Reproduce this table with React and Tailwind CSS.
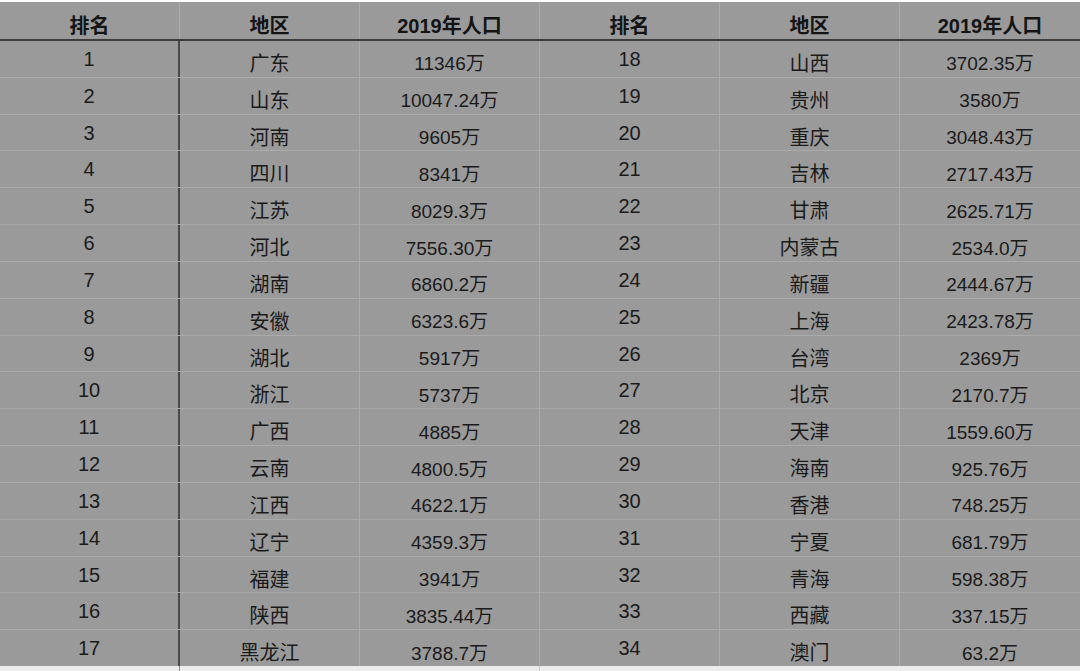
import React from "react";

const left = [
  ["1", "广东", "11346万"],
  ["2", "山东", "10047.24万"],
  ["3", "河南", "9605万"],
  ["4", "四川", "8341万"],
  ["5", "江苏", "8029.3万"],
  ["6", "河北", "7556.30万"],
  ["7", "湖南", "6860.2万"],
  ["8", "安徽", "6323.6万"],
  ["9", "湖北", "5917万"],
  ["10", "浙江", "5737万"],
  ["11", "广西", "4885万"],
  ["12", "云南", "4800.5万"],
  ["13", "江西", "4622.1万"],
  ["14", "辽宁", "4359.3万"],
  ["15", "福建", "3941万"],
  ["16", "陕西", "3835.44万"],
  ["17", "黑龙江", "3788.7万"],
];

const right = [
  ["18", "山西", "3702.35万"],
  ["19", "贵州", "3580万"],
  ["20", "重庆", "3048.43万"],
  ["21", "吉林", "2717.43万"],
  ["22", "甘肃", "2625.71万"],
  ["23", "内蒙古", "2534.0万"],
  ["24", "新疆", "2444.67万"],
  ["25", "上海", "2423.78万"],
  ["26", "台湾", "2369万"],
  ["27", "北京", "2170.7万"],
  ["28", "天津", "1559.60万"],
  ["29", "海南", "925.76万"],
  ["30", "香港", "748.25万"],
  ["31", "宁夏", "681.79万"],
  ["32", "青海", "598.38万"],
  ["33", "西藏", "337.15万"],
  ["34", "澳门", "63.2万"],
];

const font = {
  fontFamily: '"Liberation Sans", "Noto Sans CJK SC", sans-serif',
};

function HeaderCell({ children, border = true }) {
  return (
    <div
      className={
        "w-[180px] flex items-center justify-center pt-[10px] text-[20px] font-bold text-[#141414] " +
        (border ? "border-r border-[#acacac]" : "")
      }
    >
      {children}
    </div>
  );
}

export default function App() {
  const rows = left.map((l, i) => [l, right[i]]);
  return (
    <div className="w-[1080px] h-[671px] bg-white pt-[2px] overflow-hidden" style={font}>
      <div className="bg-[#9a9a9a] h-[664px] flex flex-col">
        <div className="flex h-[39px] border-b-2 border-[#3c3c3c] leading-none">
          <HeaderCell>排名</HeaderCell>
          <HeaderCell>地区</HeaderCell>
          <HeaderCell>2019年人口</HeaderCell>
          <HeaderCell>排名</HeaderCell>
          <HeaderCell>地区</HeaderCell>
          <HeaderCell border={false}>2019年人口</HeaderCell>
        </div>
        <div className="flex-1 flex flex-col">
          {rows.map(([l, r], i) => (
            <div
              key={i}
              className={
                "flex-1 flex text-[#1a1a1a] leading-none " +
                (i > 0 ? "border-t border-[#aaaaaa]" : "")
              }
            >
              <div className="w-[180px] flex items-center justify-center text-[20px] border-r-2 border-[#4a4a4a]">
                {l[0]}
              </div>
              <div className="w-[180px] flex items-center justify-center pt-[10px] text-[20px] border-r border-[#acacac]">
                {l[1]}
              </div>
              <div className="w-[180px] flex items-center justify-center pt-[10px] text-[19px] border-r border-[#acacac]">
                {l[2]}
              </div>
              <div className="w-[180px] flex items-center justify-center text-[20px] border-r border-[#acacac]">
                {r[0]}
              </div>
              <div className="w-[180px] flex items-center justify-center pt-[10px] text-[20px] border-r border-[#acacac]">
                {r[1]}
              </div>
              <div className="w-[180px] flex items-center justify-center pt-[10px] text-[19px]">
                {r[2]}
              </div>
            </div>
          ))}
        </div>
      </div>
      <div className="flex h-[5px] bg-[#ececec]">
        <div className="w-[180px] border-r border-[#8a8a8a]" />
        <div className="w-[360px] border-r border-[#cfcfcf]" />
      </div>
    </div>
  );
}
